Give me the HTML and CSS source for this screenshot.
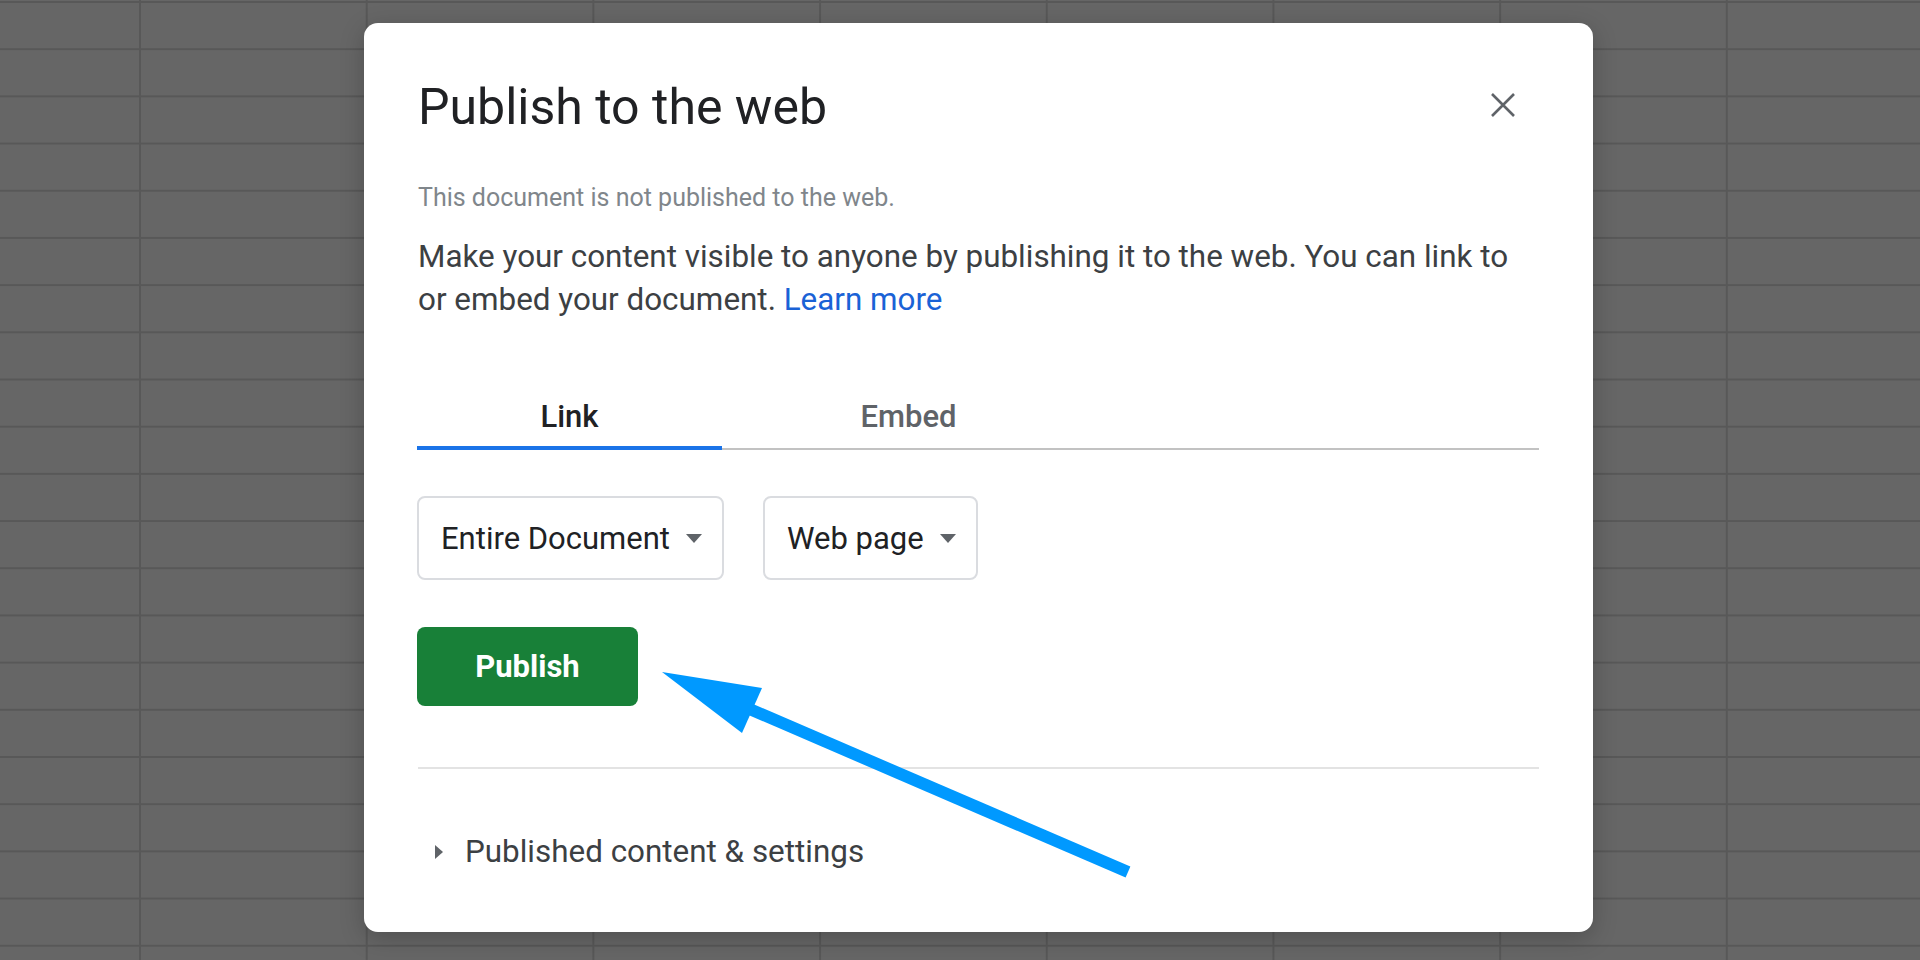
FILE: index.html
```html
<!DOCTYPE html>
<html lang="en">
<head>
<meta charset="utf-8">
<title>Publish to the web</title>
<link rel="stylesheet" href="styles.css">
</head>
<body>
  <div class="dialog">
    <div class="header">
      <h1 class="title">Publish to the web</h1>
      <button class="close" aria-label="Close">
        <svg width="24" height="24" viewBox="0 0 24 24"><path d="M1 1 L23 23 M23 1 L1 23" stroke="#5f6368" stroke-width="2.6" fill="none"/></svg>
      </button>
    </div>
    <p class="status">This document is not published to the web.</p>
    <p class="desc">Make your content visible to anyone by publishing it to the web. You can link to or embed your document. <a class="learn" href="#">Learn more</a></p>
    <div class="tabs">
      <div class="tab tab-link active">Link</div>
      <div class="tab tab-embed">Embed</div>
    </div>
    <div class="selects">
      <div class="select"><span>Entire Document</span><span class="caret"></span></div>
      <div class="select"><span>Web page</span><span class="caret"></span></div>
    </div>
    <button class="publish">Publish</button>
    <div class="divider"></div>
    <div class="settings"><span class="tri"></span><span>Published content &amp; settings</span></div>
  </div>
  <svg class="pointer" width="1920" height="960" viewBox="0 0 1920 960">
    <line x1="745" y1="707" x2="1128" y2="872" stroke="#0099ff" stroke-width="12"/>
    <polygon points="662,672 762,688 742,733" fill="#0099ff"/>
  </svg>
</body>
</html>
```

FILE: styles.css
```css
* { box-sizing: border-box; }
html, body { margin: 0; padding: 0; }
body {
  width: 1920px;
  height: 960px;
  overflow: hidden;
  position: relative;
  display: flex;
  align-items: flex-start;
  font-family: Roboto, "Liberation Sans", Arial, sans-serif;
  background-color: #666666;
  background-image:
    linear-gradient(to right, #585858 0, #585858 2px, transparent 2px),
    linear-gradient(to bottom, #585858 0, #585858 2px, transparent 2px);
  background-size: 226.7px 100%, 100% 47.2px;
  background-position: 139px 0, 0 1px;
}
.dialog {
  margin: 23px 0 0 364px;
  width: 1229px;
  height: 909px;
  background: #ffffff;
  border-radius: 14px;
  box-shadow: 0 6px 24px rgba(0,0,0,0.22);
  padding: 54px 54px 0 54px;
  display: flex;
  flex-direction: column;
}
.header {
  display: flex;
  align-items: center;
  justify-content: space-between;
  height: 60px;
}
.title {
  margin: 0;
  font-size: 50px;
  line-height: 60px;
  font-weight: 400;
  color: #202124;
}
.close {
  width: 48px;
  height: 48px;
  margin: 0 12px 4px 0;
  padding: 0;
  border: 0;
  background: transparent;
  display: flex;
  align-items: center;
  justify-content: center;
}
.status {
  margin: 46px 0 0 0;
  font-size: 25px;
  line-height: 30px;
  color: #80868b;
}
.desc {
  margin: 22px 0 0 0;
  max-width: 1100px;
  font-size: 31.4px;
  line-height: 43px;
  color: #3c4043;
}
.learn {
  color: #1a62d6;
  text-decoration: none;
}
.tabs {
  margin-top: 76px;
  display: flex;
  box-shadow: inset 0 -2px 0 #c2c2c2;
}
.tab {
  font-size: 31px;
  font-weight: 500;
  line-height: 36px;
  padding: 2px 0 11px 0;
  border-bottom: 4px solid transparent;
  text-align: center;
  color: #5f6368;
}
.tab-link { width: 305px; margin-left: -1px; }
.tab-embed { width: 373px; }
.tab.active {
  color: #202124;
  border-bottom-color: #1a73e8;
}
.selects {
  margin-top: 46px;
  display: flex;
  gap: 39px;
}
.select {
  height: 84px;
  margin-left: -1px;
  border: 2px solid #dadce0;
  border-radius: 8px;
  display: flex;
  align-items: center;
  gap: 16px;
  padding: 0 20px 0 22px;
  font-size: 31px;
  color: #202124;
}
.select + .select { margin-left: 0; }
.caret {
  width: 0;
  height: 0;
  border-left: 8px solid transparent;
  border-right: 8px solid transparent;
  border-top: 9px solid #5f6368;
}
.publish {
  margin: 47px 0 0 -1px;
  width: 221px;
  height: 79px;
  border: 0;
  border-radius: 8px;
  background: #188038;
  color: #ffffff;
  font-family: Roboto, "Liberation Sans", Arial, sans-serif;
  font-size: 31px;
  font-weight: 700;
  padding: 0;
}
.divider {
  margin-top: 61px;
  height: 2px;
  background: #e3e3e3;
}
.settings {
  margin-top: 61px;
  display: flex;
  align-items: center;
  height: 43px;
  font-size: 31.4px;
  color: #3c4043;
}
.tri {
  width: 0;
  height: 0;
  margin: 0 22px 0 17px;
  border-top: 7px solid transparent;
  border-bottom: 7px solid transparent;
  border-left: 8px solid #5f6368;
}
.pointer {
  position: absolute;
  left: 0;
  top: 0;
  pointer-events: none;
}
```
